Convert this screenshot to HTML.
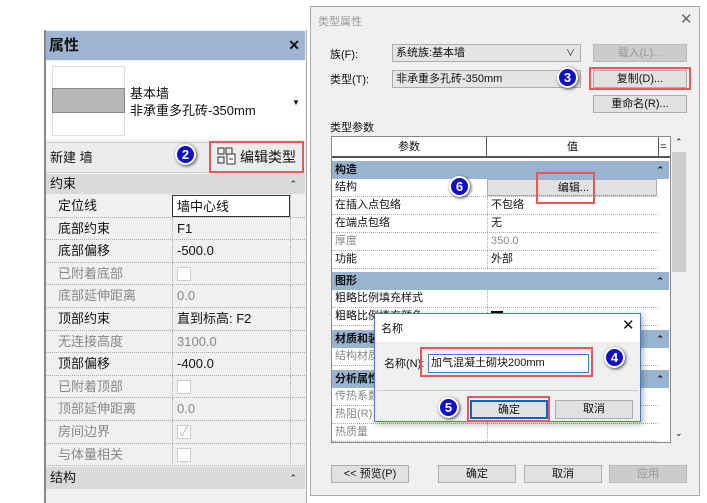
<!DOCTYPE html><html><head><meta charset="utf-8"><style>
*{margin:0;padding:0;box-sizing:border-box}
body{width:707px;height:503px;background:#fff;position:relative;overflow:hidden;font-family:"Liberation Sans","Noto Sans CJK SC",sans-serif;font-size:12px;color:#111}
.a{position:absolute}
.lp{left:44px;top:30px;width:263px;height:473px;background:#f0f0f0;border-left:2px solid #888;border-right:1px solid #aaa}
.row{position:absolute;left:46px;width:259px;height:22.6px;border-bottom:1px dotted #aaa;font-size:13px;line-height:22px}
.row .k{position:absolute;left:12px}
.row .v{position:absolute;left:126px;top:0;height:22px;border-left:1px dotted #aaa;padding-left:4px;width:118px}
.row .e{position:absolute;left:244px;top:0;height:22px;border-left:1px dotted #aaa}
.g{color:#888}
.cb{display:inline-block;width:14px;height:14px;border:1px solid #ccc;background:#fff;margin-top:4px}
.btn{position:absolute;background:#e1e1e1;border:1px solid #adadad;text-align:center;font-size:11px;line-height:16px}
.tr{position:absolute;left:332px;width:326px;height:18px;border-bottom:1px dotted #aaa;font-size:11px;line-height:17px;padding-left:3px;background:#fff}
.tr .v{position:absolute;left:155px;top:0;height:17px;border-left:1px dotted #aaa;padding-left:3px}
.sec{position:absolute;left:332px;width:337px;height:18px;background:#99b4d1;font-weight:bold;font-size:11px;line-height:18px;padding-left:3px}
.sec i{position:absolute;right:5px;font-style:normal;font-size:9px}
.c{position:absolute;width:21px;height:21px;border-radius:50%;background:#1010c8;border:2px solid #fff;box-shadow:1px 1px 3px #444;color:#fff;font-weight:bold;font-size:13px;text-align:center;line-height:17px}
.red{position:absolute;border:2px solid #e55;}
</style></head><body>
<div class="a lp"></div>
<div class="a" style="left:46px;top:31px;width:259px;height:29px;background:#9db5d2;font-weight:bold;font-size:15px;line-height:29px;padding-left:3px">属性<span style="position:absolute;right:5px;font-size:14px">✕</span></div>
<div class="a" style="left:46px;top:61px;width:259px;height:79px;background:#fff"></div>
<div class="a" style="left:52px;top:66px;width:73px;height:70px;border:1px solid #ddd;background:#fff"></div>
<div class="a" style="left:52px;top:88px;width:73px;height:25px;background:#b8b8b8;border:1px solid #888"></div>
<div class="a" style="left:130px;top:85px;font-size:13px;line-height:17px">基本墙<br>非承重多孔砖-350mm</div>
<div class="a" style="left:292px;top:98px;font-size:8px">▼</div>
<div class="a" style="left:46px;top:142px;width:259px;height:31px;background:#ececec;border-top:1px solid #ccc;border-bottom:1px solid #ccc;font-size:13px;line-height:30px;padding-left:4px">新建 墙</div>
<svg class="a" style="left:217px;top:147px" width="20" height="18"><g fill="none" stroke="#333"><rect x="1" y="1" width="6" height="6"/><rect x="1" y="10" width="6" height="6"/><rect x="9" y="1" width="6" height="6"/><rect x="10" y="7" width="8" height="10" fill="#fff"/><line x1="12" y1="12" x2="16" y2="12"/></g></svg>
<div class="a" style="left:240px;top:147px;font-size:14px">编辑类型</div>
<div class="red" style="left:209px;top:141px;width:95px;height:32px"></div>
<div class="c" style="left:175px;top:144px">2</div>
<div class="a" style="left:46px;top:174px;width:259px;height:20px;background:#dadada;font-size:13px;line-height:20px;padding-left:4px">约束<span style="position:absolute;right:8px;font-size:9px">⌃</span></div>
<div class="row" style="top:195px"><span class="k">定位线</span><span class="v" style="border:1px solid #333;background:#fff">墙中心线</span><span class="e"></span></div>
<div class="row" style="top:217.6px"><span class="k">底部约束</span><span class="v">F1</span><span class="e"></span></div>
<div class="row" style="top:240.2px"><span class="k">底部偏移</span><span class="v">-500.0</span><span class="e"></span></div>
<div class="row g" style="top:262.8px"><span class="k">已附着底部</span><span class="v"><span class="cb"></span></span><span class="e"></span></div>
<div class="row g" style="top:285.4px"><span class="k">底部延伸距离</span><span class="v">0.0</span><span class="e"></span></div>
<div class="row" style="top:308px"><span class="k">顶部约束</span><span class="v">直到标高: F2</span><span class="e"></span></div>
<div class="row g" style="top:330.6px"><span class="k">无连接高度</span><span class="v">3100.0</span><span class="e"></span></div>
<div class="row" style="top:353.2px"><span class="k">顶部偏移</span><span class="v">-400.0</span><span class="e"></span></div>
<div class="row g" style="top:375.8px"><span class="k">已附着顶部</span><span class="v"><span class="cb"></span></span><span class="e"></span></div>
<div class="row g" style="top:398.4px"><span class="k">顶部延伸距离</span><span class="v">0.0</span><span class="e"></span></div>
<div class="row g" style="top:421px"><span class="k">房间边界</span><span class="v"><span class="cb" style="text-align:center;line-height:12px;color:#bbb">✓</span></span><span class="e"></span></div>
<div class="row g" style="top:443.6px"><span class="k">与体量相关</span><span class="v"><span class="cb"></span></span><span class="e"></span></div>
<div class="a" style="left:46px;top:467px;width:259px;height:22px;background:#dadada;font-size:13px;line-height:22px;padding-left:4px">结构<span style="position:absolute;right:8px;font-size:9px">⌃</span></div>

<div class="a" style="left:310px;top:6px;width:390px;height:490px;background:#f0f0f0;border:1px solid #aaa"></div>
<div class="a" style="left:318px;top:13px;color:#999;font-size:11px">类型属性</div>
<div class="a" style="left:680px;top:10px;color:#666;font-size:15px">✕</div>
<div class="a" style="left:330px;top:46px;font-size:11px">族(F):</div>
<div class="a" style="left:330px;top:71px;font-size:11px">类型(T):</div>
<div class="a" style="left:392px;top:44px;width:189px;height:18px;background:#e5e5e5;border:1px solid #adadad;font-size:11px;line-height:16px;padding-left:3px">系统族:基本墙<span style="position:absolute;right:5px;font-size:9px">∨</span></div>
<div class="a" style="left:392px;top:70px;width:189px;height:18px;background:#e5e5e5;border:1px solid #adadad;font-size:11px;line-height:16px;padding-left:3px">非承重多孔砖-350mm</div>
<div class="btn" style="left:593px;top:44px;width:94px;height:18px;color:#999;background:#ccc;border-color:#bbb">载入(L)...</div>
<div class="btn" style="left:593px;top:70px;width:94px;height:18px">复制(D)...</div>
<div class="red" style="left:589px;top:67px;width:102px;height:23px"></div>
<div class="btn" style="left:593px;top:95px;width:94px;height:18px">重命名(R)...</div>
<div class="c" style="left:557px;top:67px">3</div>
<div class="a" style="left:330px;top:119px;font-size:11px">类型参数</div>
<div class="a" style="left:331px;top:136px;width:340px;height:307px;background:#fff;border:1px solid #888"></div>
<div class="a" style="left:332px;top:137px;width:338px;height:21px;background:#fff;border-bottom:2px solid #555;font-size:11px;line-height:20px">
<span class="a" style="left:0;width:155px;text-align:center;border-right:1px solid #555;height:20px">参数</span>
<span class="a" style="left:155px;width:172px;text-align:center;border-right:1px solid #555;height:20px">值</span>
<span class="a" style="left:328px">=</span></div>
<div class="a" style="left:672px;top:136px;width:15px;height:307px;background:#f0f0f0"></div>
<div class="a" style="left:672px;top:152px;width:14px;height:120px;background:#cdcdcd"></div>
<div class="a" style="left:675px;top:137px;font-size:9px">⌃</div>
<div class="a" style="left:675px;top:428px;font-size:9px">⌄</div>
<div class="sec" style="top:161px">构造<i>⌃</i></div>
<div class="tr" style="top:179px">结构<span class="v" style="width:170px;background:#e1e1e1;border:1px solid #aaa;text-align:center">编辑...</span></div>
<div class="tr" style="top:197px">在插入点包络<span class="v">不包络</span></div>
<div class="tr" style="top:215px">在端点包络<span class="v">无</span></div>
<div class="tr g" style="top:233px">厚度<span class="v">350.0</span></div>
<div class="tr" style="top:251px">功能<span class="v">外部</span></div>
<div class="sec" style="top:272px">图形<i>⌃</i></div>
<div class="tr" style="top:290px">粗略比例填充样式<span class="v"></span></div>
<div class="tr" style="top:308px">粗略比例填充颜色<span class="v"><span style="display:inline-block;width:12px;height:8px;background:#000"></span></span></div>
<div class="sec" style="top:330px">材质和装饰<i>⌃</i></div>
<div class="tr g" style="top:348px">结构材质<span class="v"></span></div>
<div class="sec" style="top:370px">分析属性<i>⌃</i></div>
<div class="tr g" style="top:388px">传热系数<span class="v"></span></div>
<div class="tr g" style="top:406px">热阻(R)<span class="v"></span></div>
<div class="tr g" style="top:424px">热质量<span class="v"></span></div>
<div class="red" style="left:536px;top:172px;width:59px;height:32px"></div>
<div class="c" style="left:449px;top:176px">6</div>
<div class="btn" style="left:331px;top:465px;width:78px;height:18px">&lt;&lt; 预览(P)</div>
<div class="btn" style="left:438px;top:465px;width:78px;height:18px">确定</div>
<div class="btn" style="left:524px;top:465px;width:78px;height:18px">取消</div>
<div class="btn" style="left:609px;top:465px;width:78px;height:18px;color:#999;background:#ccc;border-color:#bbb">应用</div>

<div class="a" style="left:374px;top:313px;width:267px;height:109px;background:#f0f0f0;border:1px solid #3c7fd6;box-shadow:2px 2px 6px rgba(0,0,0,.3)"></div>
<div class="a" style="left:375px;top:314px;width:265px;height:28px;background:#fff"></div>
<div class="a" style="left:381px;top:320px;font-size:11px">名称</div>
<div class="a" style="left:622px;top:316px;font-size:15px">✕</div>
<div class="a" style="left:384px;top:355px;font-size:11px">名称(N):</div>
<div class="a" style="left:428px;top:354px;width:161px;height:19px;background:#fff;border:1px solid #3c7fd6;font-size:11px;line-height:17px;padding-left:2px">加气混凝土砌块200mm</div>
<div class="red" style="left:420px;top:347px;width:173px;height:30px"></div>
<div class="c" style="left:604px;top:347px">4</div>
<div class="a" style="left:377px;top:390px;width:261px;border-top:1px solid #ccc"></div>
<div class="btn" style="left:470px;top:400px;width:78px;height:19px;border:2px solid #0a64d0">确定</div>
<div class="btn" style="left:555px;top:400px;width:78px;height:19px">取消</div>
<div class="red" style="left:467px;top:396px;width:83px;height:26px"></div>
<div class="c" style="left:438px;top:397px">5</div>
</body></html>
